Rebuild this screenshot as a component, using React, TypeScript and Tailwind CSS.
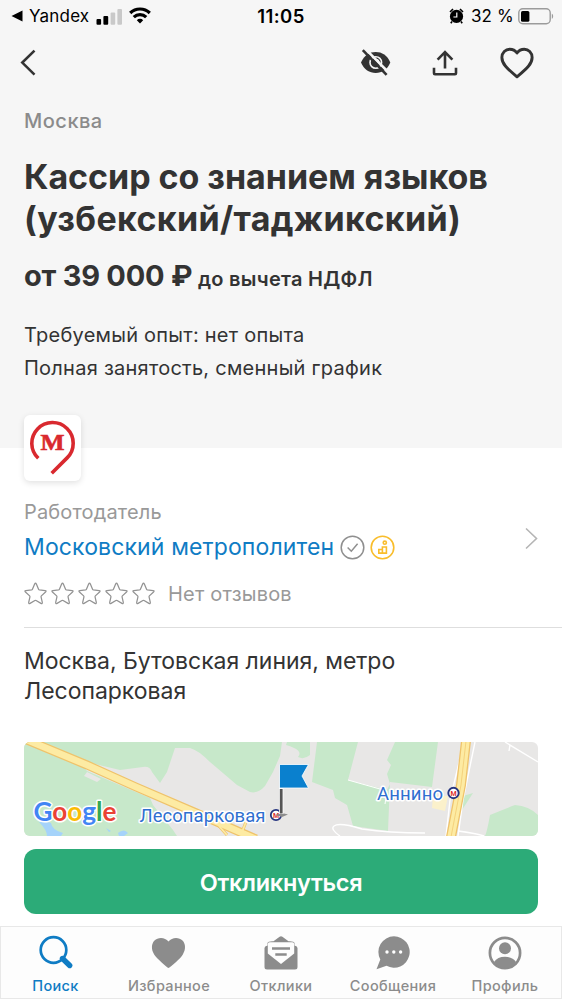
import type { ReactNode } from "react";

const STAR =
  "M11.100 2.200Q12 .4 12.900 2.200L15.300 7.700Q15.500 8.200 16.100 8.300L22 8.900Q23.800 9.200 22.500 10.500L18.100 14.500Q17.700 14.900 17.800 15.500L19.100 21.300Q19.300 23.100 17.700 22.300L12.600 19.300Q12 19 11.400 19.300L6.300 22.300Q4.700 23.100 4.900 21.300L6.200 15.500Q6.300 14.900 5.900 14.500L1.500 10.500Q.2 9.200 2 8.900L7.900 8.300Q8.500 8.200 8.700 7.700Z";

function StatusBar() {
  return (
    <div className="flex h-8 items-center justify-between pl-[11px] pr-2 text-[17px] leading-8 text-black">
      <div className="flex w-[200px] items-center">
        <svg width="12" height="12" viewBox="0 0 12 12">
          <path d="M0.5 6L11.5 0.4V11.6Z" />
        </svg>
        <span className="ml-[6px] w-[67px] tracking-[0.2px]">Yandex</span>
        <svg width="26" height="17" viewBox="0 0 26 17">
          <rect x="0.5" y="11" width="4.6" height="5.7" rx="1" />
          <rect x="7.4" y="8" width="4.8" height="8.7" rx="1" />
          <rect x="14.6" y="4.6" width="4.6" height="12.1" rx="1" fill="#c9c9c9" />
          <rect x="21.4" y="1" width="4.6" height="15.7" rx="1" fill="#c9c9c9" />
        </svg>
        <svg className="-mt-[2px] ml-[7px]" width="22" height="18" viewBox="0 0 22 18" fill="none" stroke="#000" strokeWidth="3.2">
          <path d="M1.2 7a14 14 0 0 1 19.6 0" />
          <path d="M4.8 11.2a8.8 8.8 0 0 1 12.4 0" />
          <path d="M11 17.6l-3.2-3.4a4.5 4.5 0 0 1 6.4 0z" fill="#000" stroke="none" />
        </svg>
      </div>
      <span className="mr-[3px] text-[18.5px] font-semibold tracking-[0.4px]">11:05</span>
      <div className="flex w-[200px] items-center justify-end">
        <svg width="15" height="16" viewBox="0 0 15 16">
          <circle cx="7.5" cy="8.4" r="6.6" />
          <path d="M1 4L4 1M14 4L11 1M3 13.5L1.8 15.2M12 13.5l1.2 1.7" stroke="#000" strokeWidth="1.6" />
          <path d="M7.8 4.4V9H4.4" fill="none" stroke="#fff" strokeWidth="1.2" />
        </svg>
        <span className="ml-[7px] w-[47px] whitespace-nowrap tracking-[0.1px]">32 %</span>
        <svg width="36" height="17" viewBox="0 0 36 17">
          <rect x="0.8" y="0.8" width="31.4" height="15" rx="4" fill="none" stroke="#9b9b9b" strokeWidth="1.4" />
          <rect x="3" y="3" width="8.4" height="10.8" rx="1.6" />
          <path d="M33.8 5.8c1.8.6 1.8 4.4 0 5z" fill="#9b9b9b" />
        </svg>
      </div>
    </div>
  );
}

function Toolbar() {
  return (
    <div className="flex h-[62px] items-center pl-5 pr-7">
      <svg width="16" height="28" viewBox="0 0 16 28" fill="none" stroke="#333" strokeWidth="2.6">
        <path d="M14.5 1.6L2.3 13.6L14.5 25.6" />
      </svg>
      <svg className="ml-auto" width="32" height="28" viewBox="0 0 32 28">
        <path d="M1 13.5C4.2 6.3 9.5 3.1 15.7 3.1S27.3 6.3 30.3 13.5C27.3 20.7 22 23.9 15.7 23.9S4.2 20.7 1 13.5z" fill="#333" />
        <circle cx="15.8" cy="13.5" r="5.8" fill="none" stroke="#f6f6f6" strokeWidth="1.6" />
        <path d="M15.8 10.3a3.2 3.2 0 0 1 3.2 3.2" fill="none" stroke="#f6f6f6" strokeWidth="1.3" />
        <path d="M4.6 -0.8L29.6 24.5" stroke="#f6f6f6" strokeWidth="2.6" />
        <path d="M2.8 1.2L26.6 25.8" stroke="#333" strokeWidth="2.6" />
      </svg>
      <svg className="ml-[40px]" width="26" height="28" viewBox="0 0 26 28" fill="none" stroke="#333" strokeWidth="2.6">
        <path d="M13 19.5V3.8M5.6 10.6L13 3.2l7.4 7.4" />
        <path d="M2 18.8v5.4a1 1 0 0 0 1 1h20a1 1 0 0 0 1-1v-5.4" />
      </svg>
      <svg className="ml-[42px]" width="34" height="32" viewBox="0 0 34 32" fill="none" stroke="#333" strokeWidth="2.9" strokeLinejoin="round">
        <path d="M17 29.8C14 27.3 8.5 22.8 5.4 19C2.8 15.9 1.8 13.4 1.9 10.3C2 5.5 5.5 2.2 9.7 2.2C13 2.2 15.3 3.6 17 6C18.7 3.6 21 2.2 24.3 2.2C28.5 2.2 32 5.5 32.1 10.3C32.2 13.4 31.2 15.9 28.6 19C25.5 22.8 20 27.3 17 29.8Z" />
      </svg>
    </div>
  );
}

function MetroLogo() {
  return (
    <div className="-mt-[33px] h-[66px] w-[57px] rounded-[6px] bg-white shadow-[0_2px_6px_rgba(0,0,0,0.12)]">
      <svg width="57" height="66" viewBox="0 0 57 66">
        <path d="M14.3 43.3A20.7 20.7 0 1 1 43.1 42.9L27.7 58.3" fill="none" stroke="#d9292f" strokeWidth="3.6" />
        <text x="16.5" y="34.8" textLength="24" lengthAdjust="spacingAndGlyphs" fontSize="24" fontWeight="700" fontFamily="Liberation Serif, serif" fill="#d9292f" stroke="#d9292f" strokeWidth="0.6">
          М
        </text>
      </svg>
    </div>
  );
}

function Employer() {
  return (
    <section>
      <div className="mt-[19px] flex justify-between pr-6">
        <div>
          <p className="text-[20px] leading-6 tracking-[0.15px] text-[#999]">Работодатель</p>
          <div className="mt-2 flex h-[30px] items-center text-[23px] leading-[30px] text-[#0f7cc4]">
            <span className="w-[316px] whitespace-nowrap tracking-[0.13px]">Московский метрополитен</span>
            <svg width="25" height="25" viewBox="0 0 25 25" fill="none" stroke="#8f8f8f" strokeWidth="1.5">
              <circle cx="12.5" cy="12.5" r="11.3" />
              <path d="M7.6 12.5l3.7 3.7 6.3-7.4" />
            </svg>
            <svg className="ml-[5px]" width="25" height="25" viewBox="0 0 25 25" fill="none" stroke="#f9bd2b" strokeWidth="1.6">
              <circle cx="12.5" cy="12.5" r="11.3" />
              <circle cx="14.8" cy="7.7" r="1.6" />
              <path d="M8.8 14.5h3.6v3.6H8.800zM12.400 18.100V12h4v6.100z" />
            </svg>
          </div>
        </div>
        <svg className="mt-[27px]" width="13" height="23" viewBox="0 0 13 23" fill="none" stroke="#b5b5b5" strokeWidth="1.6">
          <path d="M1 1.5L11.5 11.5L1 21.5" />
        </svg>
      </div>
      <div className="mt-5 flex h-6 items-center">
        <div className="-mt-[2px] flex gap-1">
          {[1, 2, 3, 4, 5].map((n) => (
            <svg key={n} width="23" height="23" viewBox="0 0 24 24" fill="none" stroke="#929292" strokeWidth="1.3" strokeLinejoin="round">
              <path d={STAR} />
            </svg>
          ))}
        </div>
        <span className="ml-[13px] text-[20px] leading-6 tracking-[0.2px] text-[#999]">Нет отзывов</span>
      </div>
    </section>
  );
}

function MapPreview() {
  return (
    <svg className="mt-9 h-[94px] w-[514px] rounded-[6px]" viewBox="0 0 514 94">
      <rect width="514" height="94" fill="#e8e7e6" />
      <g fill="#c7e8ca">
        <path d="M0 0H258L256 14L249 30L241 44Q234 52 226 50L213 43L186 20Q174 8 166 6H151L143 30L136 41L128 30Q126 24 119 25L96 28L54 18L63 29L126 56L129 63L149 88L153 94H0Z" />
        <path d="M263 0H286V13Q280 18 274 15Q280 8 262 3Z" />
        <path d="M293 0H334L324 38L363 48L366 42L363 32L367 23L363 18L371 0H414L408 45L366 40L364 89L329 84L323 63L311 56L309 48L288 40Z" />
        <path d="M439 54L449 51L438 68Z" />
        <path d="M461 94Q463 90 466 73Q478 68 491 63Q505 64 514 73V94Z" />
      </g>
      <path d="M63 30l14 7-4 3-13-6z" fill="#e8e7e6" />
      <path d="M15 80q5-2 12 1q1 7 12 10l-2 3h-14q0-6-8-14zM82 86l5 3-2 1zM94 91q6-5 10 0l-4 3h-5z" fill="#a5d3fa" />
      <path d="M409 54h15l-3 15-13-3z" fill="#fbf1cb" />
      <g fill="none" stroke="#fff" strokeWidth="1.4">
        <path d="M316 94Q306 87 310 84Q315 80 338 87Q365 91 401 91" />
        <path d="M324 38L363 49L361 62" strokeWidth="1" />
        <path d="M422 94L426 58L440 0M434 94L439 58L451 0M434 89Q450 91 460 94" />
        <path d="M481 0L514 20M486 3l-1 6" />
      </g>
      <g fill="none" stroke="#efc36b">
        <path d="M195 84l8 9M218 90l4-10" strokeWidth="3" />
        <path d="M3 -2L63 23L112 45L170 70L232 97" strokeWidth="9" />
        <path d="M442 -1L437 43L427 95" strokeWidth="10" />
      </g>
      <g fill="none" stroke="#fdeba3">
        <path d="M195 84l8 9M218 90l4-10" strokeWidth="1.8" />
        <path d="M3 -2L63 23L112 45L170 70L232 97" strokeWidth="6.6" />
        <path d="M442 -1L437 43L427 95" strokeWidth="7.4" />
        <path d="M442 -1L437 43L427 95" stroke="#f4d27d" strokeWidth="1" />
      </g>
      <g fontFamily="Roboto, sans-serif" fontSize="18.5" fill="#2f6fd0" stroke="#fff" strokeWidth="3" strokeLinejoin="round" paintOrder="stroke">
        <text x="115.5" y="80" textLength="126">Лесопарковая</text>
        <text x="353" y="58" textLength="66">Аннино</text>
      </g>
      <circle cx="252" cy="73" r="5.2" fill="#fff" stroke="#26357f" strokeWidth="1.8" />
      <circle cx="429.5" cy="51" r="5.2" fill="#fff" stroke="#26357f" strokeWidth="1.9" />
      <g fontFamily="Roboto, sans-serif" fontSize="7" fontWeight="700" fill="#e0322d" textAnchor="middle">
        <text x="252" y="75.5">М</text>
        <text x="429.5" y="53.5">М</text>
      </g>
      <path d="M251 73l7-2 6 1.5-6 2.5z" fill="#8c8c8c" />
      <rect x="255" y="46" width="4.4" height="26" fill="#fff" />
      <rect x="255.8" y="47" width="2.8" height="24.5" fill="#555" />
      <path d="M255.5 22.5H284.5L278 34L284.5 46H255.5Z" fill="#0a80ce" stroke="#fff" strokeWidth="0.8" />
      <text x="9.5" y="79" textLength="83" lengthAdjust="spacingAndGlyphs" fontFamily="Lato, sans-serif" fontSize="27.5" fontWeight="700" strokeWidth="3" stroke="#fff" strokeLinejoin="round" paintOrder="stroke">
        <tspan fill="#4285f4">G</tspan>
        <tspan fill="#ea4335">o</tspan>
        <tspan fill="#fbbc05">o</tspan>
        <tspan fill="#4285f4">g</tspan>
        <tspan fill="#34a853">l</tspan>
        <tspan fill="#ea4335">e</tspan>
      </text>
    </svg>
  );
}

function Tab({ label, active = false, children }: { label: string; active?: boolean; children: ReactNode }) {
  return (
    <div
      className={
        active
          ? "flex w-28 shrink-0 flex-col items-center pr-[3px] text-[#0f7cc4]"
          : "flex w-28 shrink-0 flex-col items-center text-[#8c8c8c]"
      }
    >
      <svg className="mt-2" width="36" height="36" viewBox="0 0 36 36" fill="currentColor">
        {children}
      </svg>
      <span className="mt-[6px] whitespace-nowrap text-[14.5px] font-medium leading-[18px] tracking-[0.35px]">{label}</span>
    </div>
  );
}

function TabBar() {
  return (
    <nav className="mt-3 flex h-[73px] border border-[#e8e8e8] bg-[#fdfdfd]">
      <Tab label="Поиск" active>
        <circle cx="15.5" cy="15" r="12.8" fill="none" stroke="currentColor" strokeWidth="2.7" />
        <path d="M24.5 23.5L31.7 30.5" stroke="currentColor" strokeWidth="5.4" strokeLinecap="round" />
      </Tab>
      <Tab label="Избранное">
        <path d="M17.5 33C16 32.6 5.500 23 3.300 19.700C0 14.400 .3 9 3.500 5.600C7 1.800 14 2 17.500 6.500C21 2 28 1.800 31.500 5.600C34.700 9 35 14.400 31.700 19.700C30 23 19 32.600 17.500 33Z" />
      </Tab>
      <Tab label="Отклики">
        <path d="M1.5 13Q1.5 11.3 4.5 10.5V8Q5 6.3 9 6.3H10.5L16.6 1.8Q18 .8 19.4 1.8L25.5 6.3H27Q31 6.3 31.5 8V10.5Q34.5 11.3 34.5 13V32Q34.5 34.5 32 34.5H4Q1.5 34.5 1.5 32Z" />
        <path d="M4.8 9Q4.8 7.2 6.6 7.2H29.4Q31.2 7.2 31.2 9V18.5L18 29L4.8 18.5Z" fill="#fdfdfd" />
        <path d="M9 13.5H27M12.3 19.5H23.7" stroke="currentColor" strokeWidth="2.7" />
      </Tab>
      <Tab label="Сообщения">
        <path d="M19 1.3A15.7 15.7 0 1 1 11.5 30.800L1.500 34.300L5.300 24.500A15.700 15.700 0 0 1 19 1.300Z" />
        <g fill="#fff">
          <circle cx="12" cy="17" r="1.7" />
          <circle cx="18.8" cy="17" r="1.7" />
          <circle cx="25.6" cy="17" r="1.7" />
        </g>
      </Tab>
      <Tab label="Профиль">
        <circle cx="18" cy="18" r="15.1" fill="none" stroke="currentColor" strokeWidth="2.7" />
        <circle cx="18" cy="13.3" r="6" />
        <path d="M7 27Q10.5 21.8 18 21.8T29 27Q25 32.8 18 32.8T7 27Z" />
      </Tab>
    </nav>
  );
}

export default function App() {
  return (
    <div className="h-[1000px] w-[562px] overflow-hidden bg-white font-['Inter','Noto_Sans',sans-serif] text-[#333]">
      <header className="h-[448px] bg-[#f6f6f6]">
        <StatusBar />
        <Toolbar />
        <div className="whitespace-nowrap px-6 pt-[15px]">
          <p className="text-[20px] font-medium leading-6 tracking-[0.5px] text-[#8b8b8b]">Москва</p>
          <h1 className="mt-[23px] text-[34px] font-bold leading-[42px]">
            <span className="block tracking-[-0.04px]">Кассир со знанием языков</span>
            <span className="block tracking-[0.34px]">(узбекский/таджикский)</span>
          </h1>
          <div className="mt-[18px] flex items-baseline leading-9">
            <span className="w-[174px] text-[29px] font-bold tracking-[-0.25px]">от 39 000 ₽</span>
            <span className="text-[20px] font-semibold tracking-[0.27px]">до вычета НДФЛ</span>
          </div>
          <div className="mt-[22px] text-[20px] leading-[33px] tracking-[0.25px]">
            <p>Требуемый опыт: нет опыта</p>
            <p>Полная занятость, сменный график</p>
          </div>
        </div>
      </header>
      <main className="pl-6">
        <MetroLogo />
        <Employer />
        <hr className="mt-[21px] border-t border-[#dedede]" />
        <p className="mt-[18px] text-[23px] leading-[30px] tracking-[-0.03px]">
          Москва, Бутовская линия, метро
          <br />
          Лесопарковая
        </p>
        <MapPreview />
        <button className="mt-[13px] block h-[65px] w-[514px] rounded-xl bg-[#2cab78] pt-[2px] text-[23.5px] font-semibold tracking-[-0.3px] text-white">
          Откликнуться
        </button>
      </main>
      <TabBar />
    </div>
  );
}
